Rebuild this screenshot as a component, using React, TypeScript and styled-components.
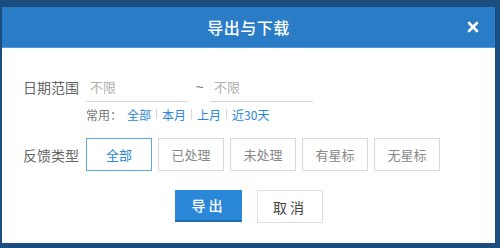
import React, { useState } from "react";
import styled, { createGlobalStyle } from "styled-components";

const Global = createGlobalStyle`
  html, body { margin: 0; padding: 0; background: #1b4d7e; }
  body { font-family: "Noto Sans CJK SC", "Liberation Sans", sans-serif; }
  * { box-sizing: border-box; }
`;

const Frame = styled.div`
  width: 500px;
  height: 248px;
  padding: 7px 5px 5px 2px;
  background: #1b4d7e;
`;

const Dialog = styled.div`
  width: 493px;
  height: 236px;
  background: #fff;
  display: flex;
  flex-direction: column;
`;

const Header = styled.div`
  height: 41px;
  background: #2a7cc7;
  border-bottom: 1px solid #4d9be0;
  display: flex;
  align-items: center;
  justify-content: center;
  position: relative;
  color: #fff;
`;

const Title = styled.div`
  font-size: 16px;
  font-weight: 500;
  letter-spacing: 0.5px;
`;

const Close = styled.button`
  position: absolute;
  right: 14px;
  top: 12px;
  width: 16px;
  height: 16px;
  padding: 0;
  border: 0;
  background: transparent;
  cursor: pointer;
  display: flex;
  align-items: center;
  justify-content: center;
`;

const Body = styled.div`
  padding: 24px 0 0 21px;
  display: flex;
  flex-direction: column;
`;

const Row = styled.div<{ $mt?: number }>`
  display: flex;
  align-items: center;
  margin-top: ${(p) => p.$mt ?? 0}px;
`;

const Label = styled.div`
  width: 63px;
  font-size: 14px;
  color: #666;
  white-space: nowrap;
`;

const DateInput = styled.input`
  width: 103px;
  height: 30px;
  border: 0;
  border-bottom: 1px solid #d8d8d8;
  outline: none;
  padding: 0 0 0 4px;
  font-family: inherit;
  font-size: 13px;
  color: #333;
  &::placeholder { color: #b0b0b0; }
`;

const Tilde = styled.span`
  width: 21px;
  text-align: center;
  color: #777;
  font-size: 14px;
  font-family: "Liberation Sans", sans-serif;
`;

const Quick = styled.div`
  display: flex;
  align-items: center;
  margin-left: 63px;
  margin-top: 3px;
  font-size: 12px;
  color: #777;
  height: 18px;
`;

const QuickLabel = styled.span`
  margin-right: 5px;
`;

const QuickLink = styled.a`
  color: #2a86d6;
  text-decoration: none;
  cursor: pointer;
`;

const Sep = styled.span`
  display: inline-block;
  width: 1px;
  height: 10px;
  background: #d6d6d6;
  margin: 0 5px;
`;

const TypeGroup = styled.div`
  display: flex;
  gap: 6px;
`;

const TypeBtn = styled.button<{ $active?: boolean }>`
  width: 66px;
  height: 33px;
  background: #fff;
  border: 1px solid ${(p) => (p.$active ? "#5aa8e8" : "#d9d9d9")};
  color: ${(p) => (p.$active ? "#2a86d6" : "#888")};
  font-family: inherit;
  font-size: 13px;
  cursor: pointer;
  padding: 0;
`;

const Footer = styled.div`
  display: flex;
  justify-content: flex-start;
  gap: 15px;
  padding-left: 173px;
  margin-top: 19px;
`;

const PrimaryBtn = styled.button`
  width: 67px;
  height: 32px;
  background: #2b88d9;
  border: 0;
  border-bottom: 2px solid #1f6cb0;
  color: #fff;
  font-family: inherit;
  font-size: 14px;
  font-weight: 500;
  letter-spacing: 3px;
  cursor: pointer;
`;

const CancelBtn = styled.button`
  width: 66px;
  height: 33px;
  background: #fff;
  border: 1px solid #e0e0e0;
  color: #444;
  font-family: inherit;
  font-size: 14px;
  letter-spacing: 3px;
  cursor: pointer;
`;

const types = ["全部", "已处理", "未处理", "有星标", "无星标"];
const quick = ["全部", "本月", "上月", "近30天"];

export default function App() {
  const [active, setActive] = useState(0);
  return (
    <>
      <Global />
      <Frame>
        <Dialog>
          <Header>
            <Title>导出与下载</Title>
            <Close aria-label="关闭">
              <svg width="12" height="12" viewBox="0 0 12 12">
                <path d="M2 2 L10 10 M10 2 L2 10" stroke="#fff" strokeWidth="2.6" strokeLinecap="round" />
              </svg>
            </Close>
          </Header>
          <Body>
            <Row>
              <Label>日期范围</Label>
              <DateInput placeholder="不限" />
              <Tilde>~</Tilde>
              <DateInput placeholder="不限" />
            </Row>
            <Quick>
              <QuickLabel>常用：</QuickLabel>
              {quick.map((q, i) => (
                <React.Fragment key={q}>
                  {i > 0 && <Sep />}
                  <QuickLink>{q}</QuickLink>
                </React.Fragment>
              ))}
            </Quick>
            <Row $mt={15}>
              <Label>反馈类型</Label>
              <TypeGroup>
                {types.map((t, i) => (
                  <TypeBtn key={t} $active={i === active} onClick={() => setActive(i)}>
                    {t}
                  </TypeBtn>
                ))}
              </TypeGroup>
            </Row>
          </Body>
          <Footer>
            <PrimaryBtn>导出</PrimaryBtn>
            <CancelBtn>取消</CancelBtn>
          </Footer>
        </Dialog>
      </Frame>
    </>
  );
}
